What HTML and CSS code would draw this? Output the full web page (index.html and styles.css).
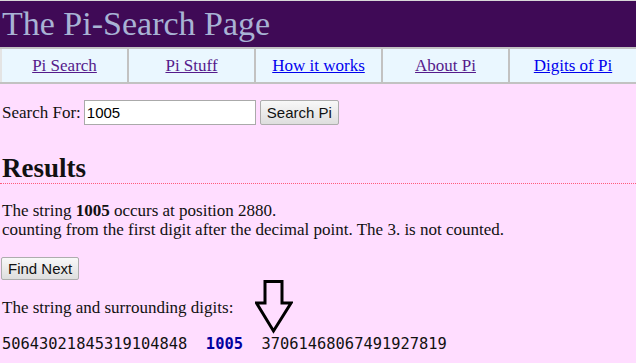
FILE: index.html
```html
<!DOCTYPE html>
<html lang="en">
<head>
    <meta charset="UTF-8">
    <title>The Pi-Search Page</title>
    <link rel="stylesheet" href="styles.css">
</head>
<body>
    <div class="banner">
        <h1>The Pi-Search Page</h1>
    </div>
    <table class="nav">
        <tr>
            <td><a class="seen" href="#">Pi Search</a></td>
            <td><a class="seen" href="#">Pi Stuff</a></td>
            <td><a href="#">How it works</a></td>
            <td><a class="seen" href="#">About Pi</a></td>
            <td><a href="#">Digits of Pi</a></td>
        </tr>
    </table>

    <form class="search" onsubmit="return false">
        <label for="query">Search For:</label>
        <input type="text" id="query" value="1005">
        <button type="submit">Search Pi</button>
    </form>

    <h2 class="results">Results</h2>
    <p class="found">
        The string <b>1005</b> occurs at position 2880.<br>
        counting from the first digit after the decimal point. The 3. is not counted.
    </p>
    <button class="find-next">Find Next</button>
    <p class="around">The string and surrounding digits:</p>
    <div class="digits">50643021845319104848  <span class="hit">1005</span>  37061468067491927819</div>

    <!-- arrow pointing at the match -->
    <svg class="arrow" width="38" height="54" viewBox="0 0 38 54">
        <polygon points="10,1.5 27,1.5 27,23 36,23 18.5,51 1.5,23 10,23" fill="none" stroke="#000" stroke-width="3"/>
    </svg>
</body>
</html>
```

FILE: styles.css
```css
body {
    margin: 0;
    background-color: #ffddff;
    font-family: "Liberation Serif", "Times New Roman", serif;
    font-size: 17px;
    color: #111;
    border-top: 1px solid #d8d8d8;
    position: relative;
}
.banner {
    background-color: #3f0a56;
    height: 46px;
}
.banner h1 {
    margin: 0;
    padding-left: 2px;
    font-weight: normal;
    font-size: 34px;
    line-height: 46px;
    color: #a8b3d4;
}
.nav {
    width: 100%;
    border-collapse: collapse;
    table-layout: fixed;
    background-color: #eaf7ff;
}
.nav td {
    border: 2px solid #c2c2c2;
    border-left: none;
    height: 33px;
    padding: 0;
    text-align: center;
}
.nav td:first-child {
    border-left: 2px solid #e4e4e4;
}
.nav td:last-child {
    border-right: none;
}
.nav a {
    color: #0000ee;
}
.nav a.seen {
    color: #551a8b;
}
.search {
    margin: 16px 0 0 2px;
    display: flex;
    align-items: center;
}
.search input {
    width: 166px;
    height: 21px;
    margin: 0 4px 0 3px;
    padding: 1px 2px;
    border: 1px solid #aaa;
    font-family: "Liberation Sans", Arial, sans-serif;
    font-size: 15px;
}
button {
    font-family: "Liberation Sans", Arial, sans-serif;
    font-size: 15px;
    color: #111;
    height: 25px;
    padding: 0 6px;
    border: 1px solid #adadad;
    border-radius: 2px;
    background: linear-gradient(#f8f8f8, #dedede);
}
.results {
    margin: 28px 0 0 0;
    padding-left: 2px;
    font-size: 27px;
    line-height: 30px;
    border-bottom: 1px dotted #ff5a7a;
}
.found {
    margin: 17px 0 0 2px;
    line-height: 19px;
}
.find-next {
    margin: 18px 0 0 1px;
    height: 23px;
}
.around {
    margin: 18px 0 0 2px;
}
.digits {
    margin: 17px 0 0 2px;
    font-family: "DejaVu Sans Mono", "Liberation Mono", monospace;
    font-size: 15.4px;
    white-space: pre;
}
.hit {
    color: #0000a0;
    font-weight: bold;
}
/* 箭頭：壓在文字上方 */
.arrow {
    position: absolute;
    left: 255px;
    top: 279px;
}
```
